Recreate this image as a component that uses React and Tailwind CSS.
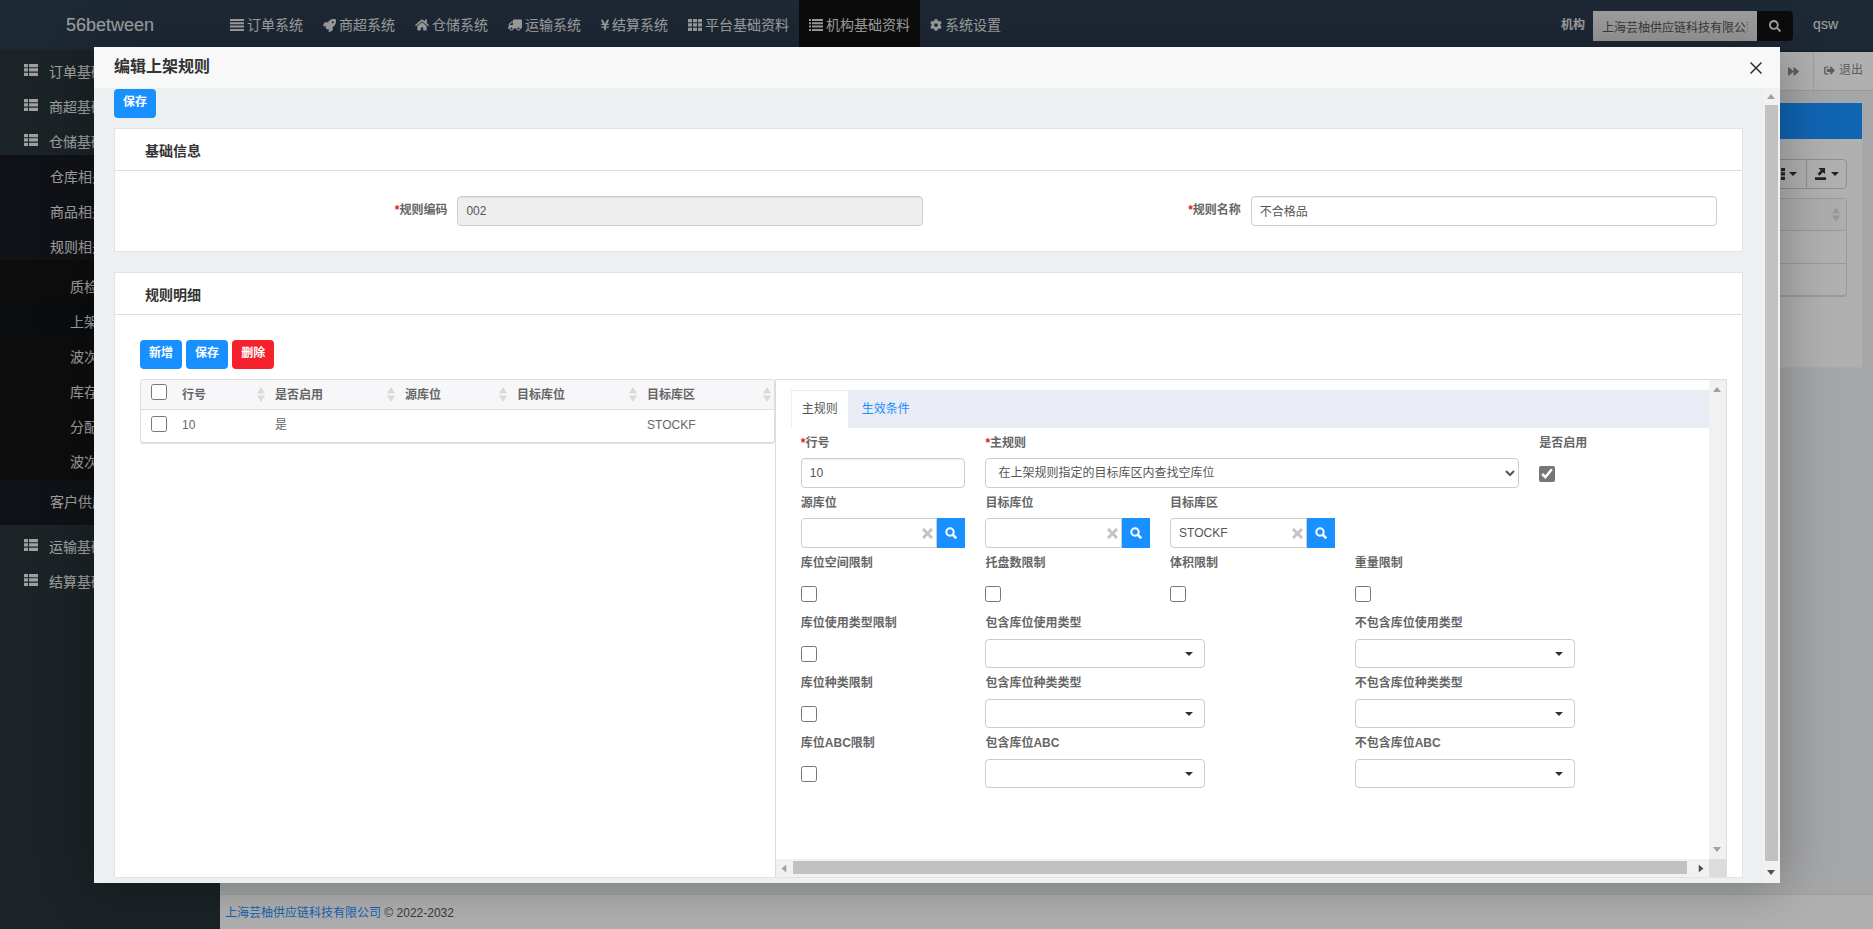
import { FaCog, FaForward, FaHome, FaRocket, FaSearch, FaSignOutAlt, FaTruck, FaYenSign } from "react-icons/fa";

const navItems = [
  { text: "订单系统", icon: <LinesIcon /> },
  { text: "商超系统", icon: <FaRocket size={13} /> },
  { text: "仓储系统", icon: <FaHome size={14} /> },
  { text: "运输系统", icon: <FaTruck size={14} className="-scale-x-100" /> },
  { text: "结算系统", icon: <FaYenSign size={12} className="-mx-[2px]" /> },
  { text: "平台基础资料", icon: <GridIcon /> },
  { text: "机构基础资料", icon: <ListIcon />, active: true },
  { text: "系统设置", icon: <FaCog size={12} /> },
];

const columns = [
  { text: "行号", width: "w-[93px]" },
  { text: "是否启用", width: "w-[130px]" },
  { text: "源库位", width: "w-[112px]" },
  { text: "目标库位", width: "w-[130px]" },
  { text: "目标库区", width: "" },
];

function LinesIcon() {
  return (
    <svg width="14" height="12" viewBox="0 0 14 12" fill="currentColor" aria-hidden="true">
      <path d="M0 0h14v2H0zM0 3.300h14v2H0zM0 6.600h14v2H0zM0 10h14v2H0z" />
    </svg>
  );
}

function GridIcon() {
  return (
    <svg width="14" height="12" viewBox="0 0 14 12" fill="currentColor" aria-hidden="true">
      <path d="M0 0h4v3.300H0zM5 0h4v3.300H5zM10 0h4v3.300h-4zM0 4.300h4v3.300H0zM5 4.300h4v3.300H5zM10 4.300h4v3.300h-4zM0 8.700h4V12H0zM5 8.700h4V12H5zM10 8.700h4V12h-4z" />
    </svg>
  );
}

function ListIcon() {
  return (
    <svg width="14" height="12" viewBox="0 0 14 12" fill="currentColor" aria-hidden="true">
      <path d="M0 0h2v2H0zM3 0h11v2H3zM0 3.300h2v2H0zM3 3.300h11v2H3zM0 6.600h2v2H0zM3 6.600h11v2H3zM0 10h2v2H0zM3 10h11v2H3z" />
    </svg>
  );
}

function ThListIcon({ className = "" }) {
  return (
    <svg width="14" height="12" viewBox="0 0 14 12" fill="currentColor" className={className} aria-hidden="true">
      <path d="M0 0h4v3.300H0zM5 0h9v3.300H5zM0 4.300h4v3.300H0zM5 4.300h9v3.300H5zM0 8.700h4V12H0zM5 8.700h9V12H5z" />
    </svg>
  );
}

function Caret({ className = "" }) {
  return (
    <svg width="8" height="4" viewBox="0 0 8 4" className={className} aria-hidden="true">
      <path d="M0 0h8L4 4z" fill="currentColor" />
    </svg>
  );
}

function SortIcon() {
  return (
    <svg width="8" height="15" viewBox="0 0 8 15" className="shrink-0 text-[#dadada]" aria-hidden="true">
      <path d="M4 0l4 6.500H0zM4 15l4-6.500H0z" fill="currentColor" />
    </svg>
  );
}

function ArrowIcon({ className = "" }) {
  return (
    <svg width="8" height="5" viewBox="0 0 8 5" className={className} aria-hidden="true">
      <path d="M4 0l4 5H0z" fill="currentColor" />
    </svg>
  );
}

function SideLink({ text, className = "" }) {
  return (
    <a href="#" className={`flex h-[35px] items-center pt-[9px] text-sm ${className}`}>
      {text}
    </a>
  );
}

function SideGroup({ text }) {
  return (
    <a href="#" className="flex h-[35px] items-center gap-[11px] pt-[9px] pl-6 text-sm">
      <ThListIcon className="-mt-1 shrink-0" />
      {text}
    </a>
  );
}

function Sidebar() {
  return (
    <aside className="w-[220px] shrink-0 bg-[#283338] text-[#e6e6e6]">
      <SideGroup text="订单基础" />
      <SideGroup text="商超基础" />
      <SideGroup text="仓储基础" />
      <div className="bg-[#191b22] pb-[10px]">
        <SideLink text="仓库相关" className="pl-[50px]" />
        <SideLink text="商品相关" className="pl-[50px]" />
        <SideLink text="规则相关" className="pl-[50px]" />
        <div className="bg-[#141414] py-[5px]">
          <SideLink text="质检" className="pl-[70px]" />
          <SideLink text="上架" className="bg-[#0f1218] pl-[70px]" />
          <SideLink text="波次" className="pl-[70px]" />
          <SideLink text="库存" className="pl-[70px]" />
          <SideLink text="分配" className="pl-[70px]" />
          <SideLink text="波次" className="pl-[70px]" />
        </div>
        <SideLink text="客户供应" className="pl-[50px]" />
      </div>
      <SideGroup text="运输基础" />
      <SideGroup text="结算基础" />
    </aside>
  );
}

function Header() {
  return (
    <header className="flex h-[50px] shrink-0 bg-[#2c3c4e] text-[#e6e6e6]">
      <a href="#" className="w-[220px] shrink-0 text-center text-lg leading-[50px] text-[#e6e6e6]">
        56between
      </a>
      <nav className="flex">
        {navItems.map((item) => (
          <a
            key={item.text}
            href="#"
            className={`flex h-[50px] items-center gap-[3px] px-[10px] text-sm ${item.active ? "bg-[#121212]" : ""}`}
          >
            {item.icon}
            <span>{item.text}</span>
          </a>
        ))}
      </nav>
      <div className="ml-auto flex items-center pt-[2px] pr-[35px]">
        <label htmlFor="org" className="pb-[3px] text-xs font-bold">
          机构
        </label>
        <input
          id="org"
          className="ml-2 h-[30px] w-[164px] bg-[#e2e2e2] px-[9px] text-xs text-[#555]"
          defaultValue="上海芸柚供应链科技有限公司"
        />
        <button className="flex h-[30px] w-9 items-center justify-center rounded-r-sm bg-[#121212] text-[#e6e6e6]" aria-label="搜索">
          <FaSearch size={12} />
        </button>
        <a href="#" className="ml-5 pb-[5px] text-sm">
          qsw
        </a>
      </div>
    </header>
  );
}

// Page that sits behind the dialog
function Background() {
  return (
    <div className="flex h-full flex-col">
      <Header />
      <div className="flex min-h-0 flex-1">
        <Sidebar />
        <div className="flex min-w-0 flex-1 flex-col border-t-2 border-[#25303c] bg-[#eceef1]">
          <div className="flex h-[39px] items-stretch justify-end border-b border-[#ddd] bg-[#fdfdfd] text-xs text-[#888]">
            <button className="flex w-10 items-center justify-center border-r border-[#e5e5e5]" aria-label="下一页">
              <FaForward size={11} />
            </button>
            <a href="#" className="flex items-center gap-1 px-[10px] pb-[2px]">
              <FaSignOutAlt size={11} />
              退出
            </a>
          </div>
          <div className="mx-[10px] mt-[11px] border border-[#f4f4f4] bg-[#fdfdfd] pb-[70px]">
            <div className="h-9 bg-[#1890ff]" />
            <div className="mx-[15px] pt-5">
              <div className="flex justify-end text-[#333]">
                <button className="flex h-[30px] w-[45px] items-center justify-center gap-1 border border-r-0 border-[#ccc]" aria-label="列">
                  <GridIcon />
                  <Caret />
                </button>
                <button className="flex h-[30px] w-[41px] items-center justify-center gap-[5px] rounded-r border border-[#ccc]" aria-label="导出">
                  <svg width="11" height="12" viewBox="0 0 11 12" fill="currentColor" aria-hidden="true">
                    <path d="M0 9.300h11V12H0zM3.500 0H10v6L7.800 4.200 4.500 7.700 2.500 5.800 5.800 2.400z" />
                  </svg>
                  <Caret />
                </button>
              </div>
              <div className="mt-[9px] rounded border border-b-2 border-[#ddd]">
                <div className="flex h-[31px] items-center justify-end bg-[#f8f8fa] pr-[6px]">
                  <SortIcon />
                </div>
                <div className="h-[33px] border-t border-[#ddd]" />
                <div className="h-8 border-t border-[#ddd]" />
              </div>
            </div>
          </div>
          <footer className="mt-auto h-[35px] border-t border-[#e3e3e3] bg-[#fdfdfd] pl-[5px] text-xs leading-9 text-[#555]">
            <a href="#" className="text-[#1890ff]">
              上海芸柚供应链科技有限公司
            </a>{" "}
            © 2022-2032
          </footer>
        </div>
      </div>
    </div>
  );
}

function Btn({ children, color = "bg-[#1890ff]" }) {
  return <button className={`h-[29px] rounded px-[9px] pb-[3px] text-xs font-bold text-white ${color}`}>{children}</button>;
}

function CardTitle({ children }) {
  return (
    <h3 className="h-[42px] shrink-0 border-b border-[#ddd] pt-[3px] pl-[30px] text-sm leading-[38px] font-bold text-[#333]">
      {children}
    </h3>
  );
}

function FieldLabel({ id, text, required }) {
  return (
    <label htmlFor={id} className="block h-5 text-xs leading-5 font-bold whitespace-nowrap text-[#666]">
      {required && <span className="text-[#e02020]">*</span>}
      {text}
    </label>
  );
}

function BasicField({ id, text, value, disabled }) {
  return (
    <div className="flex items-center">
      <div className="flex w-2/5 justify-end pr-[5px] pb-[2px]">
        <FieldLabel id={id} text={text} required />
      </div>
      <div className="w-3/5 px-[5px]">
        <input
          id={id}
          defaultValue={value}
          disabled={disabled}
          className="block h-[30px] w-full rounded border border-[#ccc] px-2 text-xs text-[#555] inset-shadow-2xs disabled:bg-[#eee]"
        />
      </div>
    </div>
  );
}

function Check({ id, text, checked }) {
  return (
    <div>
      <FieldLabel id={id} text={text} />
      <input id={id} type="checkbox" defaultChecked={checked} className="mt-[13px] block size-4 accent-[#767676]" />
    </div>
  );
}

function Lookup({ id, text, value = "" }) {
  return (
    <div>
      <FieldLabel id={id} text={text} />
      <div className="relative mt-[5px] flex">
        <input
          id={id}
          defaultValue={value}
          className="h-[30px] w-full min-w-0 rounded-l-sm border border-[#ccc] px-2 text-xs text-[#555]"
        />
        <button className="absolute top-[10px] right-8 text-[#c4c4c4]" aria-label="清除">
          <svg width="11" height="11" viewBox="0 0 11 11" stroke="currentColor" strokeWidth="3" aria-hidden="true">
            <path d="M1 1l9 9M10 1l-9 9" />
          </svg>
        </button>
        <button className="flex h-[30px] w-7 shrink-0 items-center justify-center bg-[#1890ff] text-white" aria-label="查找">
          <svg width="12" height="12" viewBox="0 0 12 12" fill="none" stroke="currentColor" strokeWidth="2" aria-hidden="true">
            <circle cx="5" cy="5" r="3.700" />
            <path d="M7.500 7.500l3.800 3.800" strokeWidth="2.500" />
          </svg>
        </button>
      </div>
    </div>
  );
}

function Picker({ id, text }) {
  return (
    <div>
      <FieldLabel id={id} text={text} />
      <div className="relative mt-[6px] w-[220px]">
        <select id={id} className="block h-[29px] w-full appearance-none rounded border border-[#ccc] bg-white px-3 text-xs">
          <option></option>
        </select>
        <Caret className="pointer-events-none absolute top-[13px] right-3 text-[#333]" />
      </div>
    </div>
  );
}

function DetailTable() {
  return (
    <div className="w-2/5">
      <div className="overflow-hidden rounded border border-b-2 border-[#ddd]">
        <table className="w-full table-fixed text-left text-xs text-[#666]">
          <thead className="bg-[#f7f7f9]">
            <tr className="h-[30px]">
              <th className="w-[34px] pl-[10px]">
                <input type="checkbox" aria-label="全选" className="mb-[5px] block size-4" />
              </th>
              {columns.map((col) => (
                <th key={col.text} className={`pr-[3px] pl-[7px] font-bold whitespace-nowrap ${col.width}`}>
                  <div className="flex items-center justify-between">
                    {col.text}
                    <SortIcon />
                  </div>
                </th>
              ))}
            </tr>
          </thead>
          <tbody>
            <tr className="h-8 border-t border-[#ddd]">
              <td className="pl-[10px]">
                <input type="checkbox" aria-label="选择" className="mb-[5px] block size-4" />
              </td>
              <td className="pb-[2px] pl-[7px]">10</td>
              <td className="pb-[2px] pl-[7px]">是</td>
              <td></td>
              <td></td>
              <td className="pb-[2px] pl-[7px]">STOCKF</td>
            </tr>
          </tbody>
        </table>
      </div>
    </div>
  );
}

function RuleForm() {
  return (
    <div className="grid auto-rows-[60px] grid-cols-5 gap-x-5 pt-[5px] pr-[5px] pl-[10px]">
      <div>
        <FieldLabel id="line" text="行号" required />
        <input
          id="line"
          defaultValue="10"
          className="mt-[5px] block h-[30px] w-full rounded border border-[#ccc] px-2 text-xs text-[#555] inset-shadow-2xs"
        />
      </div>
      <div className="col-span-3">
        <FieldLabel id="rule" text="主规则" required />
        <select
          id="rule"
          className="mt-[5px] block h-[30px] w-full rounded border border-[#ccc] bg-white pl-2 text-xs text-[#555]"
        >
          <option>在上架规则指定的目标库区内查找空库位</option>
        </select>
      </div>
      <Check id="enabled" text="是否启用" checked />

      <Lookup id="from-loc" text="源库位" />
      <Lookup id="to-loc" text="目标库位" />
      <Lookup id="to-zone" text="目标库区" value="STOCKF" />
      <div className="col-span-2" />

      <Check id="space" text="库位空间限制" />
      <Check id="pallet" text="托盘数限制" />
      <Check id="volume" text="体积限制" />
      <Check id="weight" text="重量限制" />
      <div />

      <Check id="use-type" text="库位使用类型限制" />
      <div className="col-span-2">
        <Picker id="use-in" text="包含库位使用类型" />
      </div>
      <div className="col-span-2">
        <Picker id="use-out" text="不包含库位使用类型" />
      </div>

      <Check id="kind" text="库位种类限制" />
      <div className="col-span-2">
        <Picker id="kind-in" text="包含库位种类类型" />
      </div>
      <div className="col-span-2">
        <Picker id="kind-out" text="不包含库位种类类型" />
      </div>

      <Check id="abc" text="库位ABC限制" />
      <div className="col-span-2">
        <Picker id="abc-in" text="包含库位ABC" />
      </div>
      <div className="col-span-2">
        <Picker id="abc-out" text="不包含库位ABC" />
      </div>
    </div>
  );
}

function RulePane() {
  return (
    <div className="flex w-3/5 flex-col border-x border-t border-[#ddd]">
      <div className="flex min-h-0 flex-1">
        <div className="min-w-0 flex-1 overflow-hidden pt-[10px] pl-[15px]">
          <div className="flex h-[38px] bg-[#e9ebf5] text-xs">
            <button className="border-t border-l border-[#eee] bg-white px-[10px] text-[#555]">主规则</button>
            <button className="px-[14px] text-[#1890ff]">生效条件</button>
          </div>
          <RuleForm />
        </div>
        <div className="flex w-[17px] flex-col items-center justify-between bg-[#f1f1f1] py-[7px] text-[#a0a0a0]">
          <ArrowIcon />
          <ArrowIcon className="rotate-180" />
        </div>
      </div>
      <div className="flex h-[18px] bg-[#f1f1f1]">
        <div className="flex w-[17px] items-center justify-center text-[#a0a0a0]">
          <ArrowIcon className="-rotate-90" />
        </div>
        <div className="mt-[2px] mb-[3px] flex-1 bg-[#c1c1c1]" />
        <div className="flex w-[22px] items-center justify-end pr-1 text-[#505050]">
          <ArrowIcon className="rotate-90" />
        </div>
        <div className="w-[17px] bg-[#dcdcdc]" />
      </div>
    </div>
  );
}

export default function App() {
  return (
    <div className="relative h-screen overflow-hidden font-['Liberation_Sans','Noto_Sans_CJK_SC',sans-serif]">
      <Background />

      <div className="absolute inset-0 flex items-center justify-center bg-black/30 pt-px pl-px">
        <div
          role="dialog"
          className="flex h-[calc(90%+1px)] w-[calc(90%+1px)] flex-col bg-[#ecf0f1] shadow-[1px_1px_50px_rgba(0,0,0,0.3)]"
        >
          <div className="flex h-[41px] shrink-0 items-center justify-between bg-[#f8f8f8] pr-[18px] pl-5 text-[#333]">
            <h2 className="text-base font-bold">编辑上架规则</h2>
            <button aria-label="关闭" className="pt-[2px]">
              <svg width="12" height="12" viewBox="0 0 12 12" stroke="#2d2c3b" strokeWidth="1.500" aria-hidden="true">
                <path d="M.5.5l11 11M11.500.5l-11 11" />
              </svg>
            </button>
          </div>

          <div className="flex min-h-0 flex-1">
            <div className="flex min-w-0 flex-1 flex-col px-5 pt-px pb-[5px]">
              <div className="mb-[10px] flex shrink-0">
                <Btn>保存</Btn>
              </div>

              <section className="mb-5 shrink-0 border border-[#e0e4e5] bg-white">
                <CardTitle>基础信息</CardTitle>
                <div className="grid grid-cols-2 px-5 pt-[25px] pb-[25px]">
                  <BasicField id="code" text="规则编码" value="002" disabled />
                  <BasicField id="name" text="规则名称" value="不合格品" />
                </div>
              </section>

              <section className="flex min-h-0 flex-1 flex-col border border-[#e0e4e5] bg-white">
                <CardTitle>规则明细</CardTitle>
                <div className="flex min-h-0 flex-1 flex-col pt-[25px] pr-[15px] pl-[25px]">
                  <div className="mb-[10px] flex gap-1">
                    <Btn>新增</Btn>
                    <Btn>保存</Btn>
                    <Btn color="bg-[#f5222d]">删除</Btn>
                  </div>
                  <div className="flex min-h-0 flex-1">
                    <DetailTable />
                    <RulePane />
                  </div>
                </div>
              </section>
            </div>

            <div className="flex w-[17px] shrink-0 flex-col items-center bg-[#f1f1f1] text-[#505050]">
              <div className="flex h-[17px] items-center text-[#a0a0a0]">
                <ArrowIcon />
              </div>
              <div className="w-[13px] flex-1 bg-[#c1c1c1]" />
              <div className="flex h-[22px] items-center">
                <ArrowIcon className="rotate-180" />
              </div>
            </div>
          </div>
        </div>
      </div>
    </div>
  );
}
